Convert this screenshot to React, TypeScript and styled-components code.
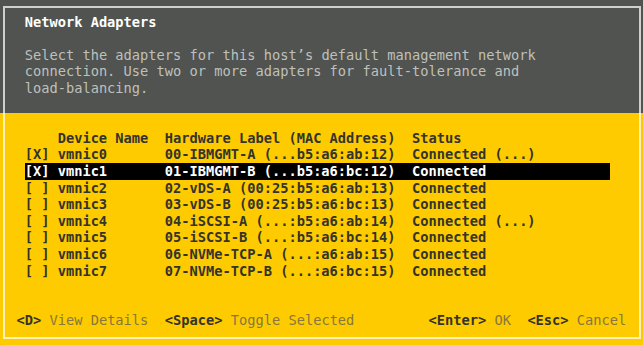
import styled, { createGlobalStyle } from "styled-components";

const GlobalStyle = createGlobalStyle`
  html, body {
    margin: 0;
    padding: 0;
    background: #fdcb00;
  }
`;

const Screen = styled.div`
  position: relative;
  width: 643px;
  height: 345px;
  overflow: hidden;
  display: flex;
  flex-direction: column;
  font-family: "DejaVu Sans Mono", "Liberation Mono", monospace;
  font-size: 13.7px;
  line-height: 16.6px;
`;

// light frame line drawn over both halves of the dialog
const Frame = styled.div`
  position: absolute;
  top: 6px;
  left: 3px;
  right: 2px;
  bottom: 6px;
  border: 2px solid rgba(255, 255, 255, 0.72);
  pointer-events: none;
`;

const Header = styled.div`
  background: #50534f;
  padding: 13.7px 0 16.6px 3ch;
`;

const Title = styled.div`
  color: #ffffff;
  font-weight: bold;
  margin-bottom: 16.6px;
`;

const Description = styled.div`
  color: #bfc0bc;
  width: 64ch;
`;

const Body = styled.div`
  flex: 1;
  background: #fdcb00;
  padding-top: 16.6px;
  display: flex;
  flex-direction: column;
`;

const Table = styled.div`
  margin-left: 3ch;
  width: 71ch;
  color: #34332c;
  font-weight: bold;
`;

const Row = styled.div<{ $selected?: boolean }>`
  display: grid;
  grid-template-columns: 4ch 13ch 30ch 1fr;
  height: 16.6px;
  white-space: pre;
  background: ${(p) => (p.$selected ? "#000000" : "transparent")};
  color: ${(p) => (p.$selected ? "#ffffff" : "inherit")};
`;

const Footer = styled.div`
  margin: 33.2px 0 0 2ch;
  width: 74ch;
  display: flex;
  justify-content: space-between;
  white-space: pre;
`;

const Group = styled.div`
  display: flex;
  gap: 2ch;
`;

const Hint = styled.span`
  color: #87773f;
`;

const Key = styled.span`
  color: #34332c;
  font-weight: bold;
`;

const adapters = [
  { on: true, name: "vmnic0", label: "00-IBMGMT-A (...b5:a6:ab:12)", status: "Connected (...)" },
  { on: true, name: "vmnic1", label: "01-IBMGMT-B (...b5:a6:bc:12)", status: "Connected" },
  { on: false, name: "vmnic2", label: "02-vDS-A (00:25:b5:a6:ab:13)", status: "Connected" },
  { on: false, name: "vmnic3", label: "03-vDS-B (00:25:b5:a6:bc:13)", status: "Connected" },
  { on: false, name: "vmnic4", label: "04-iSCSI-A (...:b5:a6:ab:14)", status: "Connected (...)" },
  { on: false, name: "vmnic5", label: "05-iSCSI-B (...:b5:a6:bc:14)", status: "Connected" },
  { on: false, name: "vmnic6", label: "06-NVMe-TCP-A (...:a6:ab:15)", status: "Connected" },
  { on: false, name: "vmnic7", label: "07-NVMe-TCP-B (...:a6:bc:15)", status: "Connected" },
];

export default function App() {
  return (
    <>
      <GlobalStyle />
      <Screen>
        <Header>
          <Title>Network Adapters</Title>
          <Description>
            Select the adapters for this host’s default management network
            connection. Use two or more adapters for fault-tolerance and
            load-balancing.
          </Description>
        </Header>
        <Body>
          <Table>
            <Row>
              <span></span>
              <span>Device Name</span>
              <span>Hardware Label (MAC Address)</span>
              <span>Status</span>
            </Row>
            {adapters.map((a, i) => (
              <Row key={a.name} $selected={i === 1}>
                <span>{a.on ? "[X]" : "[ ]"}</span>
                <span>{a.name}</span>
                <span>{a.label}</span>
                <span>{a.status}</span>
              </Row>
            ))}
          </Table>
          <Footer>
            <Group>
              <Hint><Key>&lt;D&gt;</Key> View Details</Hint>
              <Hint><Key>&lt;Space&gt;</Key> Toggle Selected</Hint>
            </Group>
            <Group>
              <Hint><Key>&lt;Enter&gt;</Key> OK</Hint>
              <Hint><Key>&lt;Esc&gt;</Key> Cancel</Hint>
            </Group>
          </Footer>
        </Body>
        <Frame />
      </Screen>
    </>
  );
}
